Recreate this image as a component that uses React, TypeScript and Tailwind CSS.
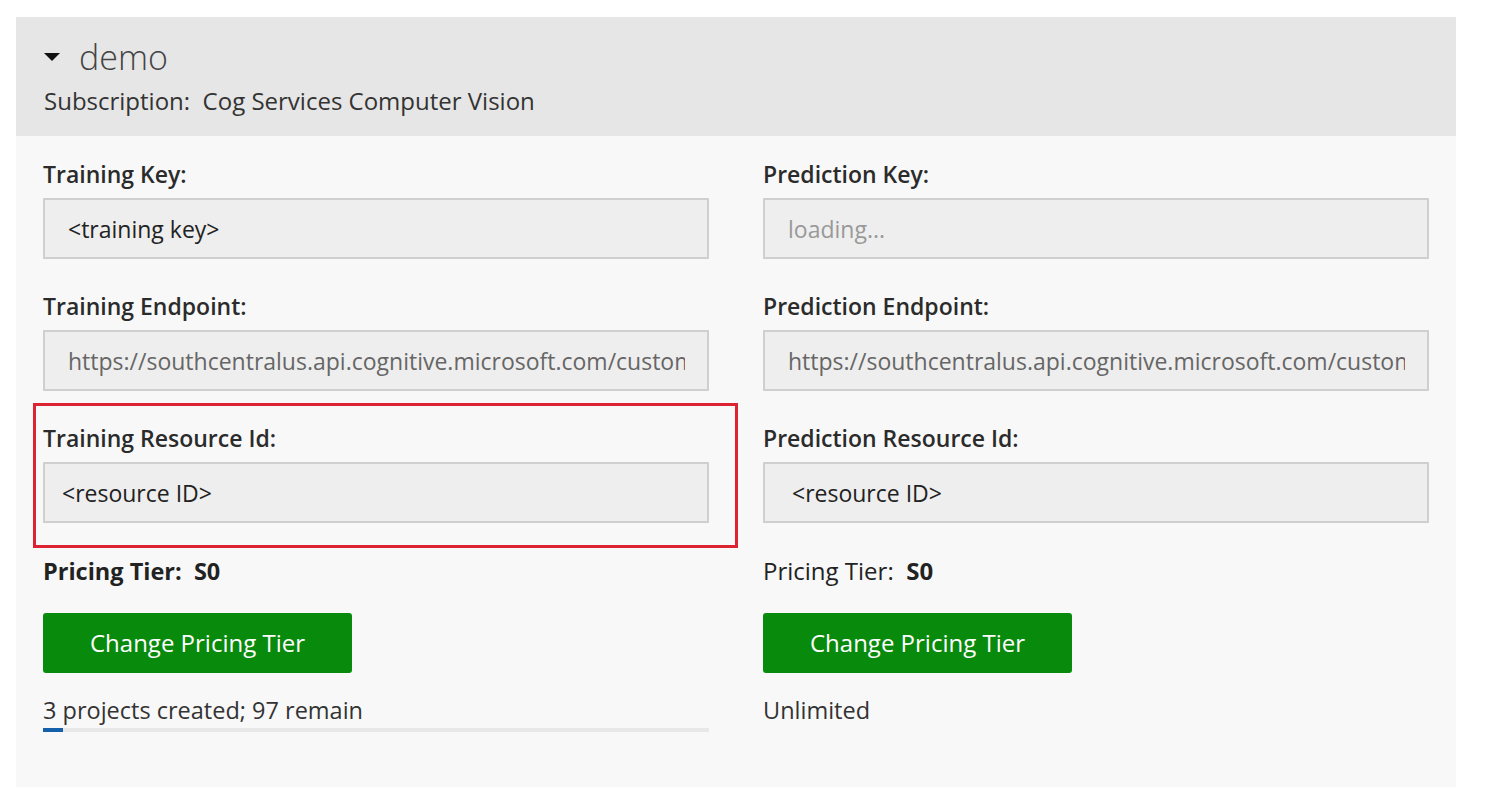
import React from "react";

const font = { fontFamily: '"Open Sans", "Noto Sans", sans-serif' };

function Field({ label, value, tone = "dark", indent = "pl-[23px]" }: { label: string; value: string; tone?: "dark" | "grey" | "light"; indent?: string }) {
  const color = tone === "dark" ? "text-[#222]" : tone === "grey" ? "text-[#666]" : "text-[#999]";
  return (
    <div className="flex flex-col">
      <div className="h-[30px] leading-[30px] text-[23px] text-[#2b2b2b] font-semibold">{label}</div>
      <div className={`mt-[9px] h-[61px] border-2 border-[#cfcfcf] bg-[#eeeeee] flex items-center ${indent} pr-[22px]`}>
        <div className={`overflow-hidden whitespace-nowrap text-[23px] leading-[32px] ${color}`}>{value}</div>
      </div>
    </div>
  );
}

export default function App() {
  return (
    <div className="min-h-screen bg-white pt-[17px] pl-[16px]" style={font}>
      <div className="w-[1440px] h-[770px] bg-[#f8f8f8] flex flex-col">
        <div className="h-[119px] bg-[#e6e6e6] pl-[28px] pt-[20px]">
          <div className="flex items-center h-[40px]">
            <svg width="16" height="9" viewBox="0 0 16 9" className="mr-[19px]">
              <polygon points="0,0 16,0 8,8" fill="#111" />
            </svg>
            <span className="text-[34px] font-light text-[#444] leading-[40px]">demo</span>
          </div>
          <div className="mt-[9px] text-[24px] text-[#333] leading-[30px] whitespace-pre">Subscription:  Cog Services Computer Vision</div>
        </div>
        <div className="grid grid-cols-[666px_666px] gap-x-[54px] pl-[27px] pt-[23px]">
          <div className="flex flex-col">
            <Field label="Training Key:" value="<training key>" />
            <div className="mt-[32px]">
              <Field label="Training Endpoint:" value="https://southcentralus.api.cognitive.microsoft.com/customvision/v3.0/training" tone="grey" />
            </div>
            <div className="mt-[12px] mb-[-25px] ml-[-10px] mr-[-29px] border-[3px] border-[#dc2331] pt-[17px] pb-[22px] pl-[7px] pr-[26px]">
              <Field label="Training Resource Id:" value="<resource ID>" indent="pl-[17px]" />
            </div>
            <div className="mt-[33px] h-[30px] leading-[30px] text-[23.5px] font-bold text-[#222] whitespace-pre">Pricing Tier:  S0</div>
            <button className="mt-[27px] w-[309px] h-[60px] rounded-[3px] bg-[#088a0c] text-white text-[24px] text-center">Change Pricing Tier</button>
            <div className="mt-[22px] h-[30px] leading-[30px] text-[23.5px] text-[#333]">3 projects created; 97 remain</div>
            <div className="mt-[3px] h-[4px] bg-[#e8e8e8] flex">
              <div className="h-full bg-[#1460aa]" style={{ width: "3%" }} />
            </div>
          </div>
          <div className="flex flex-col">
            <Field label="Prediction Key:" value="loading..." tone="light" />
            <div className="mt-[32px]">
              <Field label="Prediction Endpoint:" value="https://southcentralus.api.cognitive.microsoft.com/customvision/v3.0/prediction" tone="grey" />
            </div>
            <div className="mt-[32px]">
              <Field label="Prediction Resource Id:" value="<resource ID>" indent="pl-[27px]" />
            </div>
            <div className="mt-[33px] h-[30px] leading-[30px] text-[24px] text-[#222] whitespace-pre">Pricing Tier:  <b>S0</b></div>
            <button className="mt-[27px] w-[309px] h-[60px] rounded-[3px] bg-[#088a0c] text-white text-[24px] text-center">Change Pricing Tier</button>
            <div className="mt-[22px] h-[30px] leading-[30px] text-[23.5px] text-[#333]">Unlimited</div>
          </div>
        </div>
      </div>
    </div>
  );
}
